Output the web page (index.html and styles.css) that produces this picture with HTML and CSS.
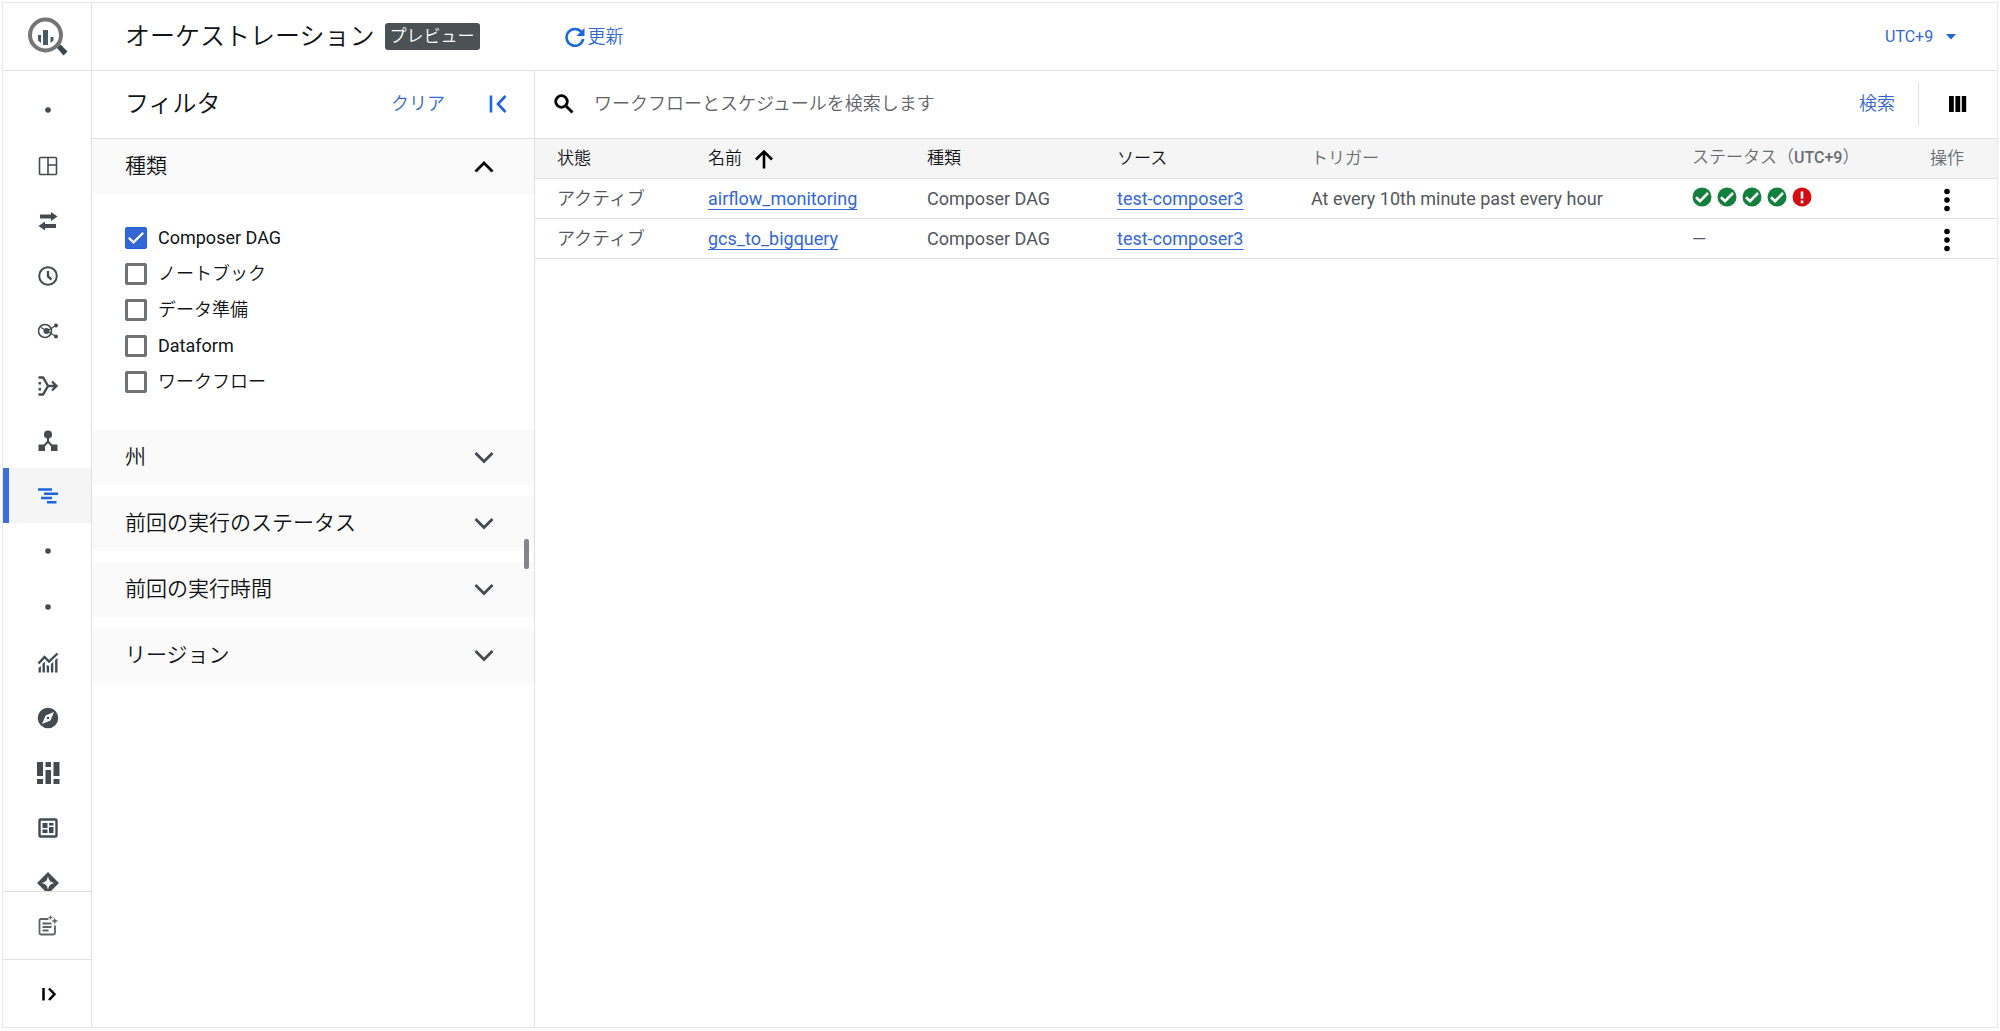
FILE: index.html
```html
<!DOCTYPE html>
<html lang="ja">
<head>
<meta charset="utf-8">
<meta name="viewport" content="width=device-width, initial-scale=1">
<title>オーケストレーション</title>
<link rel="stylesheet" href="styles.css">
</head>
<body>
<div class="app">
  <nav class="rail" aria-label="BigQuery">
    <a class="rail-logo" href="#" aria-label="BigQuery">
      <svg width="40" height="40" viewBox="0 0 40 40"><circle cx="18.500" cy="18" r="15.500" fill="none" stroke="#757575" stroke-width="4"/><path d="M30 31l3.500-3.500 7 7-4 4z" fill="#37474f"/><path d="M16 13h5v15h-5zM11 18h3v8l-3-2.500zM23.500 20h3v3.500l-3 2.500z" fill="#455a64"/></svg>
    </a>
    <div class="rail-list">
      <a class="rail-item rail-dot" href="#" aria-label="セクション"><svg width="24" height="24"><circle cx="12" cy="12" r="2.800"/></svg></a>
      <a class="rail-item" href="#" aria-label="概要"><svg width="24" height="24" fill="none" stroke="currentColor" stroke-width="1.600"><rect x="3.500" y="3.500" width="17" height="17" rx="1"/><path d="M12 4v16M12 11h8"/></svg></a>
      <a class="rail-item" href="#" aria-label="転送"><svg width="24" height="24"><path d="M4 5.500h11V3l6.500 4.500L15 12V9.500H4zM20 15H9v-2.500L2.500 17 9 21.500V19h11z"/></svg></a>
      <a class="rail-item" href="#" aria-label="スケジュール"><svg width="24" height="24" fill="none" stroke="currentColor"><circle cx="12" cy="12" r="8.800" stroke-width="2"/><path d="M12 7v5.500l3.500 3" stroke-width="2.400"/></svg></a>
      <a class="rail-item" href="#" aria-label="共有"><svg width="24" height="24"><circle cx="9" cy="12" r="6.500" fill="none" stroke="currentColor" stroke-width="1.600"/><circle cx="10.500" cy="12" r="3"/><circle cx="20" cy="6.500" r="2"/><circle cx="20" cy="17.500" r="2"/><path d="M5 8.500l6 3.500 9-5.500M11 12l9 5.500" fill="none" stroke="currentColor" stroke-width="1.300"/></svg></a>
      <a class="rail-item" href="#" aria-label="パイプライン"><svg width="24" height="24"><path d="M2.500 3.500H7L12 12l-5 8.500H2.500M11 12h9M16 7.500l4.500 4.500-4.500 4.500" fill="none" stroke="currentColor" stroke-width="2.400"/><path d="M2.500 8h2.500v2.500H2.500zM2.500 14h2.500v2.500H2.500z"/></svg></a>
      <a class="rail-item" href="#" aria-label="階層"><svg width="24" height="24"><circle cx="12" cy="5.500" r="4"/><path d="M2.500 15.500H9V22H2.500zM15 15.500h6.500V22H15z"/><path d="M12 8v5M7 18l5-5.500 5 5.500" fill="none" stroke="currentColor" stroke-width="2"/></svg></a>
      <a class="rail-item rail-item-active" href="#" aria-label="オーケストレーション" aria-current="page"><svg width="24" height="24"><path d="M2 4.300h14v2.500H2zM8 8.500h14V11H8zM5 12.700h11v2.500H5zM11 17h9.500v2.500H11z"/></svg></a>
      <a class="rail-item rail-dot" href="#" aria-label="セクション"><svg width="24" height="24"><circle cx="12" cy="12" r="2.800"/></svg></a>
      <a class="rail-item rail-dot" href="#" aria-label="セクション"><svg width="24" height="24"><circle cx="12" cy="12" r="2.800"/></svg></a>
      <a class="rail-item" href="#" aria-label="モニタリング"><svg width="24" height="24"><path d="M2.500 12.500L8.500 6l4.500 4.500L21.500 2.500" fill="none" stroke="currentColor" stroke-width="2.400"/><path d="M2.500 17l2.400-2v6.500H2.500zM6.500 12.500l2.400-1.500v10.500H6.500zM10.700 14l2.400 1v6.500h-2.400zM14.900 13l2.400-2v10.500h-2.400zM19.100 9l2.400-2v14.500h-2.400z"/></svg></a>
      <a class="rail-item" href="#" aria-label="探索"><svg width="24" height="24"><path fill-rule="evenodd" d="M12 1.700a10.300 10.300 0 100 20.600 10.300 10.300 0 000-20.600zM18 6l-3.600 8.400L6 18l3.600-8.400zM12 10.800a1.200 1.200 0 100 2.400 1.200 1.200 0 000-2.400z"/></svg></a>
      <a class="rail-item" href="#" aria-label="容量"><svg width="24" height="24"><path d="M1 1h6v14H1zM1 18h6v5H1zM9.500 1h5.500v5H9.500zM9.500 9h5.500v14H9.500zM17.500 1h6v14h-6zM17.500 18h6v5h-6z"/></svg></a>
      <a class="rail-item" href="#" aria-label="BI Engine"><svg width="24" height="24"><rect x="3.500" y="3.500" width="17" height="17" rx="1" fill="none" stroke="currentColor" stroke-width="2.400"/><path d="M6.500 7h5v5h-5zM13 7h4.500v2.500H13zM6.500 13.500h5V17h-5zM13 11h4.500v6H13z"/></svg></a>
      <a class="rail-item" href="#" aria-label="Gemini"><svg width="24" height="24"><path fill-rule="evenodd" d="M12 1l11 11-11 11L1 12zM12 5c.8 4.600 2.400 6.200 7 7-4.600.8-6.200 2.400-7 7-.8-4.600-2.400-6.200-7-7 4.600-.8 6.200-2.400 7-7z"/></svg></a>
    </div>
    <a class="rail-foot rail-foot-notes" href="#" aria-label="リリースノート"><svg width="24" height="24"><path d="M12.500 5H5q-1.500 0-1.500 1.500V19q0 1.500 1.500 1.500h12.500q1.500 0 1.500-1.500v-7.500M6.500 9.500h9M6.500 13h9M6.500 16.500h6" fill="none" stroke="currentColor" stroke-width="1.800"/><path d="M14.500 1l.7 1.800 1.800.7-1.800.7-.7 1.800-.7-1.800-1.800-.7 1.800-.7zM18.800 3.500l.9 2.600 2.600.9-2.600.9-.9 2.600-.9-2.600-2.600-.9 2.600-.9z"/></svg></a>
    <button class="rail-foot rail-foot-expand" type="button" aria-label="メニューを開く"><svg width="24" height="24" fill="none" stroke="currentColor" stroke-width="2.500"><path d="M7.500 6v12.500M13 6.500l5.500 5.700L13 18"/></svg></button>
  </nav>

  <div class="main">
    <header class="topbar">
      <h1 class="title">オーケストレーション</h1>
      <span class="badge">プレビュー</span>
      <button class="refresh" type="button"><svg width="20" height="20" fill="none" stroke="currentColor"><path d="M16.400 5A8.400 8.400 0 1018.200 12" stroke-width="2.600"/><path d="M19.500 1v8h-8z" fill="currentColor" stroke="none"/></svg>更新</button>
      <label class="zone"><select class="zone-select" aria-label="タイムゾーン"><option>UTC+9</option></select><svg class="zone-caret" width="10" height="6"><path d="M0 0h10L5 5.500z"/></svg></label>
    </header>

    <div class="columns">
      <aside class="filters">
        <div class="filters-head">
          <h2 class="filters-title">フィルタ</h2>
          <button class="text-button" type="button">クリア</button>
          <button class="collapse" type="button" aria-label="折りたたむ"><svg width="20" height="20" fill="none" stroke="currentColor" stroke-width="2.600"><path d="M3 1.500v17M17.500 2L10 10l7.500 8"/></svg></button>
        </div>
        <div class="groups">
          <section class="group">
            <button class="group-head" type="button" aria-expanded="true">種類<svg class="group-arrow group-arrow-open" width="20" height="20" fill="none" stroke="currentColor" stroke-width="2.800"><path d="M1.500 15.500L10 7l8.500 8.500"/></svg></button>
            <div class="group-body">
              <label class="check check-latin"><input type="checkbox" checked>Composer DAG</label>
              <label class="check"><input type="checkbox">ノートブック</label>
              <label class="check"><input type="checkbox">データ準備</label>
              <label class="check check-latin"><input type="checkbox">Dataform</label>
              <label class="check"><input type="checkbox">ワークフロー</label>
            </div>
          </section>
          <section class="group"><button class="group-head" type="button" aria-expanded="false">州<svg class="group-arrow" width="20" height="20" fill="none" stroke="currentColor" stroke-width="2.800"><path d="M1.500 6l8.500 8.500L18.500 6"/></svg></button></section>
          <section class="group"><button class="group-head" type="button" aria-expanded="false">前回の実行のステータス<svg class="group-arrow" width="20" height="20" fill="none" stroke="currentColor" stroke-width="2.800"><path d="M1.500 6l8.500 8.500L18.500 6"/></svg></button></section>
          <section class="group"><button class="group-head" type="button" aria-expanded="false">前回の実行時間<svg class="group-arrow" width="20" height="20" fill="none" stroke="currentColor" stroke-width="2.800"><path d="M1.500 6l8.500 8.500L18.500 6"/></svg></button></section>
          <section class="group"><button class="group-head" type="button" aria-expanded="false">リージョン<svg class="group-arrow" width="20" height="20" fill="none" stroke="currentColor" stroke-width="2.800"><path d="M1.500 6l8.500 8.500L18.500 6"/></svg></button></section>
        </div>
        <span class="grip"></span>
      </aside>

      <main class="content">
        <form class="search">
          <svg class="search-icon" width="20" height="20" fill="none" stroke="currentColor" stroke-width="2.800"><circle cx="7.500" cy="7.500" r="5.800"/><path d="M11.500 11.500l7 7"/></svg>
          <input class="search-input" type="text" aria-label="検索" placeholder="ワークフローとスケジュールを検索します">
          <button class="text-button" type="button">検索</button>
          <span class="divider"></span>
          <button class="column-button" type="button" aria-label="列の表示"><svg width="18" height="18"><path d="M0 1h4.800v16H0zM6.400 1h4.800v16H6.400zM12.800 1h4.400v16h-4.400z"/></svg></button>
        </form>
        <table class="table">
          <colgroup><col class="c-state"><col class="c-name"><col class="c-kind"><col class="c-source"><col><col class="c-status"><col class="c-action"></colgroup>
          <thead>
            <tr>
              <th>状態</th>
              <th>名前<svg class="sort" width="20" height="20" fill="none" stroke="currentColor" stroke-width="2.600"><path d="M10 19.500V3M2 10.500l8-8 8 8"/></svg></th>
              <th>種類</th>
              <th>ソース</th>
              <th class="muted">トリガー</th>
              <th class="muted">ステータス（<b>UTC+9</b>）</th>
              <th class="muted">操作</th>
            </tr>
          </thead>
          <tbody>
            <tr>
              <td>アクティブ</td>
              <td><a class="link" href="#">airflow_monitoring</a></td>
              <td>Composer DAG</td>
              <td><a class="link" href="#">test-composer3</a></td>
              <td>At every 10th minute past every hour</td>
              <td><div class="runs">
                <svg class="run-ok" width="20" height="20"><circle cx="10" cy="10" r="9.500"/><path d="M4 10.300l4 3.900L16 6"/></svg>
                <svg class="run-ok" width="20" height="20"><circle cx="10" cy="10" r="9.500"/><path d="M4 10.300l4 3.900L16 6"/></svg>
                <svg class="run-ok" width="20" height="20"><circle cx="10" cy="10" r="9.500"/><path d="M4 10.300l4 3.900L16 6"/></svg>
                <svg class="run-ok" width="20" height="20"><circle cx="10" cy="10" r="9.500"/><path d="M4 10.300l4 3.900L16 6"/></svg>
                <svg class="run-bad" width="20" height="20"><circle cx="10" cy="10" r="9.500"/><path d="M10 4.500v7.300M10 13.500v2.800"/></svg>
              </div></td>
              <td><button class="more" type="button" aria-label="操作"><svg width="6" height="24"><circle cx="3" cy="3.500" r="2.800"/><circle cx="3" cy="12" r="2.800"/><circle cx="3" cy="20.500" r="2.800"/></svg></button></td>
            </tr>
            <tr>
              <td>アクティブ</td>
              <td><a class="link" href="#">gcs_to_bigquery</a></td>
              <td>Composer DAG</td>
              <td><a class="link" href="#">test-composer3</a></td>
              <td></td>
              <td>—</td>
              <td><button class="more" type="button" aria-label="操作"><svg width="6" height="24"><circle cx="3" cy="3.500" r="2.800"/><circle cx="3" cy="12" r="2.800"/><circle cx="3" cy="20.500" r="2.800"/></svg></button></td>
            </tr>
          </tbody>
        </table>
      </main>
    </div>
  </div>
</div>
</body>
</html>
```

FILE: styles.css
```css
:root {
  --line: #e0e0e0;
  --blue: #3367d6;
  --icon-blue: #1a66dd;
  --ink: #111417;
  --body: #53575b;
  --rail-icon: #434b50;
}

* { box-sizing: border-box; }

body {
  margin: 0;
  padding: 2px 2px 3px;
  background: #fff;
  color: var(--ink);
  font: 350 18px/24px Roboto, "Noto Sans CJK JP", sans-serif;
}

button, input, select { font: inherit; color: inherit; }
button { padding: 0; border: 0; background: none; cursor: pointer; }
svg { display: block; flex: none; fill: currentColor; }
svg[fill="none"] { fill: none; }

.app {
  display: flex;
  min-height: calc(100vh - 5px);
  border: 1px solid #e8e8e8;
}

/* Navigation rail */
.rail {
  display: flex;
  flex-direction: column;
  flex: none;
  width: 89px;
  height: calc(100vh - 7px);
  border-right: 1px solid var(--line);
  color: var(--rail-icon);
}
.rail-logo {
  display: flex;
  flex: none;
  align-items: center;
  padding-left: 24px;
  height: 68px;
  border-bottom: 1px solid var(--line);
}
.rail-logo svg { overflow: visible; }
.rail-list { flex: 1; min-height: 0; padding-top: 11px; overflow: hidden; }
.rail-item {
  display: flex;
  align-items: center;
  justify-content: center;
  height: 55px;
  padding-left: 2px;
  color: inherit;
}
.rail-dot { height: 56px; }
.rail-item-active {
  border-left: 6px solid #3b70dc;
  padding: 0 4px 0 0;
  background: #f5f5f5;
  color: var(--icon-blue);
}
.rail-foot {
  display: flex;
  flex: none;
  align-items: center;
  justify-content: center;
  height: 68px;
  padding-left: 2px;
  border-top: 1px solid var(--line);
}
.rail-foot-notes { color: #5f6368; }
.rail-foot-expand { color: #000; }

/* Page header */
.main { display: flex; flex-direction: column; flex: 1; min-width: 0; }
.topbar {
  display: flex;
  align-items: center;
  height: 68px;
  padding: 0 41px 0 33px;
  border-bottom: 1px solid var(--line);
}
.title { margin: 0; font-size: 25px; font-weight: 350; line-height: 32px; }
.badge {
  margin-left: 10px;
  padding: 0 5px;
  border-radius: 3px;
  background: #4a5256;
  color: #fff;
  font-size: 17px;
  line-height: 27px;
}
.refresh {
  display: flex;
  align-items: center;
  gap: 3px;
  margin-left: 85px;
  color: var(--blue);
}
.refresh svg { color: var(--icon-blue); }
.zone {
  display: flex;
  align-items: center;
  gap: 12px;
  margin-left: auto;
  color: var(--blue);
}
.zone-select {
  appearance: none;
  padding: 0;
  border: 0;
  background: none;
  font-size: 16px;
  font-weight: 400;
}
.zone-caret { color: var(--icon-blue); }

/* Filters */
.columns { display: flex; flex: 1; }
.filters {
  position: relative;
  flex: none;
  width: 443px;
  border-right: 1px solid var(--line);
}
.filters-head {
  display: flex;
  align-items: center;
  height: 68px;
  padding: 0 26px 2px 33px;
  border-bottom: 1px solid var(--line);
}
.filters-title { flex: 1; margin: 0; font-size: 24px; font-weight: 350; line-height: 32px; }
.text-button { color: var(--blue); }
.collapse { margin-left: 43px; color: var(--icon-blue); }
.groups { display: flex; flex-direction: column; gap: 11px; }
.group-head {
  display: flex;
  align-items: center;
  justify-content: space-between;
  width: 100%;
  height: 55px;
  padding: 0 40px 2px 33px;
  background: #fafafa;
  font-size: 21px;
}
.group-arrow { color: #434b50; }
.group-arrow-open { color: #000; }
.group-body { padding: 26px 33px 19px; }
.check {
  display: flex;
  align-items: center;
  gap: 11px;
  height: 36px;
}
.check-latin { font-weight: 400; }
.check input {
  display: grid;
  place-items: center;
  appearance: none;
  width: 22px;
  height: 22px;
  margin: 0;
  border: 3px solid #707375;
  border-radius: 2px;
}
.check input:checked { border: 1px solid var(--icon-blue); background: #3367d6; }
.check input:checked::before {
  content: "";
  width: 16px;
  height: 12px;
  background: #fff;
  clip-path: polygon(0 55%, 10% 42%, 34% 72%, 90% 0, 100% 12%, 34% 100%);
}
.grip {
  position: absolute;
  top: 50%;
  right: 5px;
  width: 5px;
  height: 30px;
  margin-top: -10px;
  border-radius: 2px;
  background: #80868b;
}

/* Search and table */
.content { flex: 1; min-width: 0; }
.search {
  display: flex;
  align-items: center;
  height: 68px;
  padding: 0 30px 2px 19px;
  border-bottom: 1px solid var(--line);
}
.search-icon { color: #000; }
.search-input {
  flex: 1;
  min-width: 0;
  margin-left: 20px;
  padding: 0;
  border: 0;
  outline: 0;
  background: none;
}
.search-input::placeholder { color: #5f6368; opacity: 1; }
.divider { width: 1px; height: 44px; margin: 0 30px 0 23px; background: var(--line); }
.column-button { color: #000; }

.table { width: 100%; border-collapse: separate; border-spacing: 0; table-layout: fixed; }
.c-state { width: 151px; }
.c-name { width: 219px; }
.c-kind { width: 190px; }
.c-source { width: 194px; }
.c-status { width: 238px; }
.c-action { width: 89px; }
.table th, .table td {
  height: 40px;
  padding: 0 0 0 22px;
  border-bottom: 1px solid var(--line);
  text-align: left;
  white-space: nowrap;
}
.table th {
  padding-bottom: 2px;
  background: #f5f5f5;
  font-size: 17px;
  font-weight: 350;
}
.table th.muted { color: #686d72; }
.table th b { font-weight: 500; font-size: 16px; }
.table td { color: var(--body); font-weight: 400; }
.table td:first-child { font-weight: 350; }
.sort { display: inline-block; margin-left: 12px; vertical-align: middle; color: #000; }
.link {
  color: var(--blue);
  text-decoration: underline 1px;
  text-underline-offset: 4px;
  text-decoration-skip-ink: none;
}
.runs { display: flex; gap: 5px; padding-bottom: 3px; }
.runs path { fill: none; stroke: #fff; stroke-width: 2.6; }
.run-ok { color: #12803c; }
.run-bad { color: #d50c10; }
.more { display: flex; margin-left: 14px; padding-top: 2px; color: #000; }
```
